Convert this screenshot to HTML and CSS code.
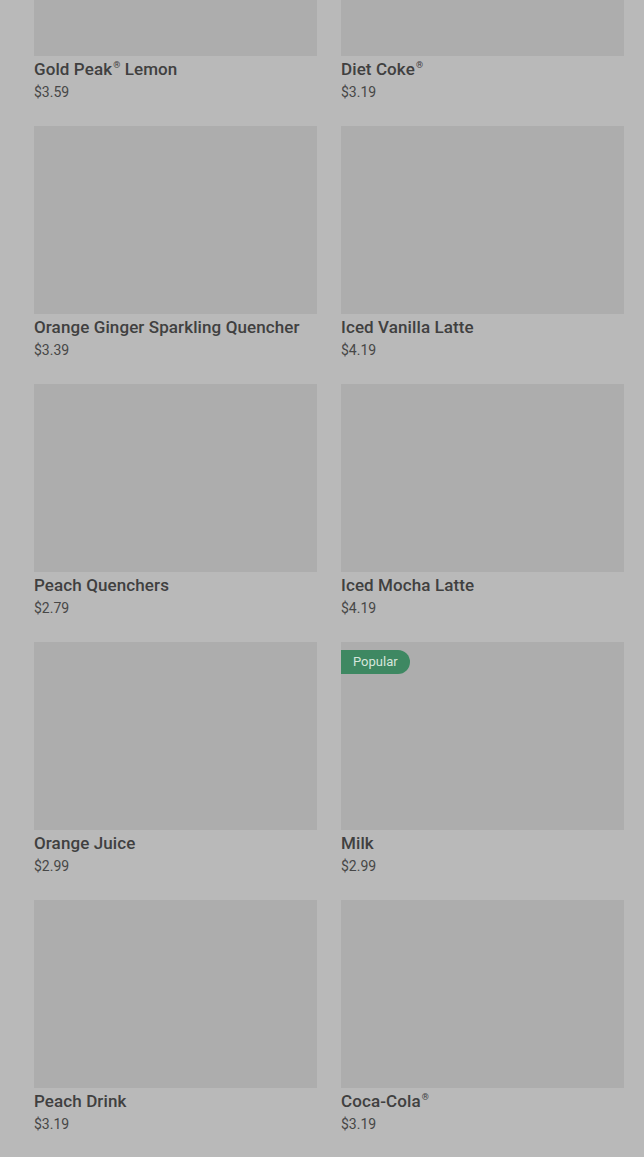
FILE: index.html
```html
<!DOCTYPE html>
<html>
<head>
<title>Drinks</title>
<link rel="stylesheet" href="styles.css">
</head>
<body>
<div class="menu">
  <div class="item-grid">
    <div class="item">
      <div class="item-image"></div>
      <div class="item-name">Gold Peak<sup>®</sup> Lemon</div>
      <div class="item-price">$3.59</div>
    </div>
    <div class="item">
      <div class="item-image"></div>
      <div class="item-name">Diet Coke<sup>®</sup></div>
      <div class="item-price">$3.19</div>
    </div>
    <div class="item">
      <div class="item-image"></div>
      <div class="item-name">Orange Ginger Sparkling Quencher</div>
      <div class="item-price">$3.39</div>
    </div>
    <div class="item">
      <div class="item-image"></div>
      <div class="item-name">Iced Vanilla Latte</div>
      <div class="item-price">$4.19</div>
    </div>
    <div class="item">
      <div class="item-image"></div>
      <div class="item-name">Peach Quenchers</div>
      <div class="item-price">$2.79</div>
    </div>
    <div class="item">
      <div class="item-image"></div>
      <div class="item-name">Iced Mocha Latte</div>
      <div class="item-price">$4.19</div>
    </div>
    <div class="item">
      <div class="item-image"></div>
      <div class="item-name">Orange Juice</div>
      <div class="item-price">$2.99</div>
    </div>
    <div class="item">
      <div class="item-image">
        <span class="badge">Popular</span>
      </div>
      <div class="item-name">Milk</div>
      <div class="item-price">$2.99</div>
    </div>
    <div class="item">
      <div class="item-image"></div>
      <div class="item-name">Peach Drink</div>
      <div class="item-price">$3.19</div>
    </div>
    <div class="item">
      <div class="item-image"></div>
      <div class="item-name">Coca-Cola<sup>®</sup></div>
      <div class="item-price">$3.19</div>
    </div>
  </div>
</div>
</body>
</html>
```

FILE: styles.css
```css
/* Menu list, scrolled behind a dimmed overlay */
body {
  margin: 0;
  background-color: #b9b9b9;
  font-family: Roboto, "Liberation Sans", sans-serif;
  color: #3c3c3c;
  overflow: hidden;
}

.menu {
  padding: 0 20px 0 34px;
  /* page is scrolled part way into the list */
  margin-top: -132px;
}

.item-grid {
  display: grid;
  grid-template-columns: 283px 283px;
  column-gap: 24px;
  row-gap: 22px;
}

.item-image {
  position: relative;
  height: 188px;
  background-color: #adadad;
}

.item-name {
  margin-top: 2px;
  font-size: 17px;
  font-weight: 500;
  line-height: 22px;
  letter-spacing: 0.1px;
  color: #404040;
}

.item-name sup {
  font-size: 9px;
  line-height: 0;
  vertical-align: 7px;
  margin-left: 1px;
}

.item-price {
  font-size: 14px;
  line-height: 24px;
  color: #474747;
}

.badge {
  position: absolute;
  top: 8px;
  left: 0;
  height: 24px;
  padding: 0 12px;
  line-height: 24px;
  font-size: 13px;
  color: #d6e6dc;
  background-color: #3e8862;
  border-radius: 0 12px 12px 0;
}
```
